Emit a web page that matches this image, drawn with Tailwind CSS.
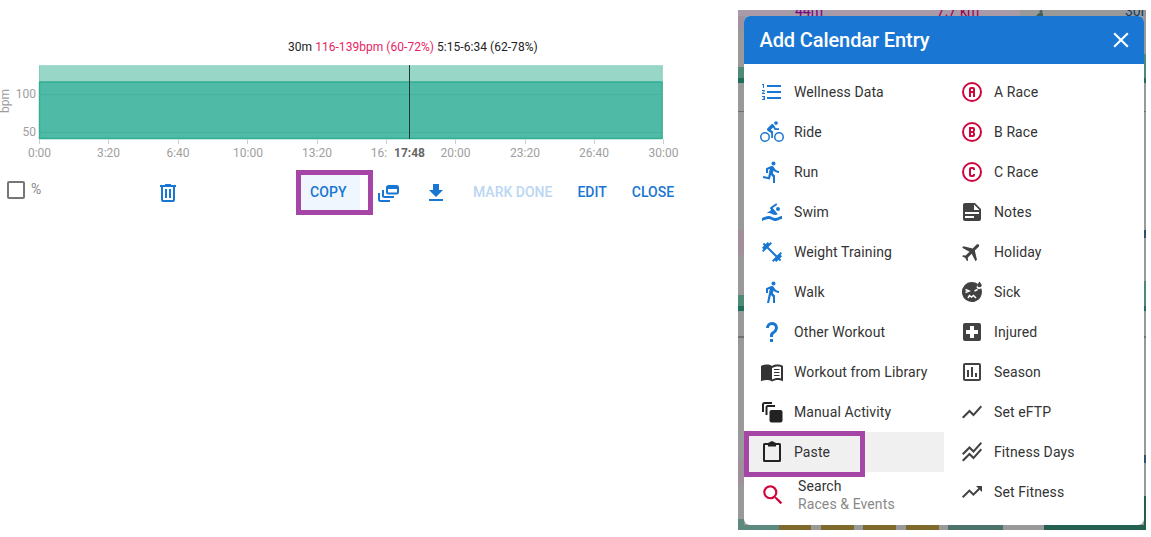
<!doctype html>
<html><head><meta charset="utf-8"><title>Add Calendar Entry</title>
<script src="https://cdn.jsdelivr.net/npm/@tailwindcss/browser@4"></script></head>
<body class="bg-white">
<div class="flex w-[1151px] h-[537px] overflow-hidden font-[Roboto,sans-serif]">
  <!-- left: workout panel -->
  <section class="relative w-[738px] shrink-0">
    <p class="pt-[40px] h-[60px] pl-[288px] text-[12px] leading-[15px] tracking-[0.04px] text-[#222] whitespace-nowrap">30m <span class="text-[#e91e63]">116-139bpm (60-72%)</span> 5:15-6:34 (62-78%)</p>
    <svg class="block" width="738" height="105" viewBox="0 60 738 105" font-family="Roboto" font-size="12" fill="#9e9e9e">
      <rect x="39" y="65" width="623.5" height="17" fill="#98d6c8"/>
      <rect x="39" y="82" width="623.5" height="57" fill="#4fbba6"/>
      <path d="M39.5 65V139M662 65V139" stroke="#7fcdb9" stroke-width="1" fill="none"/>
      <path d="M39 65.5H663" stroke="#a6dccf" fill="none"/>
      <path d="M39 82H662.500M39 138.500H662.500M39.500 82V139M662 82V139" stroke="#2fae90" stroke-width="1.4" fill="none"/>
      <path d="M39 94.500H662M39 132.500H662" stroke="#47b29c" fill="none"/>
      <path d="M409.5 65V139" stroke="#1b3a33" fill="none"/>
      <path d="M39.5 139V144M108.5 139V144M178.5 139V144M247.5 139V144M317.5 139V144M386.5 139V144M455.5 139V144M525.5 139V144M594.5 139V144M663.5 139V144" stroke="#cfcfcf" fill="none"/>
      <g text-anchor="middle">
        <text x="39.5" y="157">0:00</text><text x="108.5" y="157">3:20</text><text x="178" y="157">6:40</text><text x="248" y="157">10:00</text><text x="317" y="157">13:20</text><text x="379" y="157">16:</text><text x="455.5" y="157">20:00</text><text x="525" y="157">23:20</text><text x="594" y="157">26:40</text><text x="663.500" y="157">30:00</text>
        <text x="409.5" y="157" fill="#666" font-weight="700">17:48</text>
      </g>
      <g text-anchor="end"><text x="36" y="98">100</text><text x="36" y="136">50</text></g>
      <text transform="translate(9 101) rotate(-90)" text-anchor="middle">bpm</text>
    </svg>
    <div class="flex items-center h-[55px]">
      <span class="ml-[7px] w-[18px] h-[18px] border-2 border-[#757575] rounded-[2px] -mt-[5px]"></span>
      <span class="ml-[6px] w-[10px] text-[14px] text-[#888] -mt-[7px]">%</span>
      <svg class="ml-[115px]" width="24" height="24" viewBox="0 0 24 24" fill="#1976d2"><path d="M9,3V4H4V6H5V19A2,2 0 0,0 7,21H17A2,2 0 0,0 19,19V6H20V4H15V3H9M7,6H17V19H7V6M9,8V17H11V8H9M13,8V17H15V8H13Z"/></svg>
      <span class="ml-[121px] w-[59px] h-[35px] bg-[#f0f6fd] flex items-center pl-[9px] text-[14px] tracking-[0.1px] font-medium text-[#1976d2]">COPY</span>
      <svg class="ml-[16px]" width="24" height="24" viewBox="0 0 24 24" fill="none" stroke="#1976d2" stroke-width="2"><path d="M3 12v6.500a1.500 1.500 0 0 0 1.500 1.500H14"/><path d="M7 9v5.500a1.500 1.500 0 0 0 1.500 1.500H18"/><rect x="11" y="5" width="11" height="7.500" rx="1.500"/><path d="M11 6.500h11" stroke-width="3"/></svg>
      <svg class="ml-[24px]" width="24" height="24" viewBox="0 0 24 24" fill="#1976d2"><path d="M19 9h-4V3H9v6H5l7 7 7-7zM5 18v2h14v-2H5z"/></svg>
      <span class="ml-[25px] text-[14px] font-medium text-[#bad6f2]">MARK DONE</span>
      <span class="ml-[25px] text-[14px] font-medium text-[#1976d2]">EDIT</span>
      <span class="ml-[25px] text-[14px] font-medium text-[#1976d2]">CLOSE</span>
    </div>
    <div class="absolute left-[296px] top-[170px] w-[77px] h-[45px] border-[5px] border-[#a545a5]"></div>
  </section>

  <!-- right: dialog over dimmed calendar -->
  <section class="relative mt-[10px] w-[408px] h-[520px] shrink-0 bg-[#999] overflow-hidden p-[6px]">
    <div class="absolute left-0 top-0 w-[282px] h-[6px] bg-[#a89aa6]"></div>
    <span class="absolute left-[57px] -top-[7px] text-[14px] leading-[16px] text-[#800080]">44m</span>
    <span class="absolute left-[199px] -top-[7px] text-[14px] leading-[16px] text-[#a0005a]">7.7 km</span>
    <span class="absolute left-[387px] -top-[7px] text-[14px] leading-[16px] text-[#123c66]">30m</span>
    <svg class="absolute left-[296px] top-0" width="12" height="6" viewBox="0 0 12 6" fill="#43605e"><circle cx="7" cy="1.500" r="1.500"/><path d="M2 6l3-3h4v3z"/></svg>
    <div class="absolute left-0 top-[6px] w-[6px] h-[12px] bg-[#a2919f]"></div>
    <div class="absolute right-0 top-[44px] w-[2px] h-[13px] bg-[#4f8a78]"></div>
    <div class="absolute left-0 top-[57px] w-full h-[11px] bg-[#4f8a78]"></div>
    <div class="absolute left-0 top-[68px] w-full h-[5px] bg-[#1f6e5c]"></div>
    <div class="absolute left-0 top-[101px] w-full h-[1px] bg-[#707070]"></div>
    <div class="absolute left-0 top-[220px] w-[6px] h-[25px] bg-[#a0909c]"></div>
    <div class="absolute right-0 top-[271px] w-[2px] h-[14px] bg-[#4f8a78]"></div>
    <div class="absolute left-0 top-[285px] w-full h-[11px] bg-[#4f8a78]"></div>
    <div class="absolute left-0 top-[296px] w-full h-[5px] bg-[#1f6e5c]"></div>
    <div class="absolute left-0 top-[326px] w-full h-[2px] bg-[#707070]"></div>
    <div class="absolute left-0 top-[450px] w-[6px] h-[25px] bg-[#a0909c]"></div>
    <div class="absolute right-0 top-[220px] w-[2px] h-[8px] bg-[#2f4f6f]"></div>
    <div class="absolute right-0 top-[445px] w-[2px] h-[8px] bg-[#2f4f6f]"></div>
    <div class="absolute right-0 top-[486px] w-[2px] h-[34px] bg-[#24604f]"></div>
    <div class="absolute left-0 top-[509px] w-[6px] h-[11px] bg-[#5d8a7e]"></div>
    <div class="absolute left-0 bottom-0 w-full h-[5px] flex">
      <span class="w-[41px] bg-[#5d8a7e]"></span><span class="w-[32px] bg-[#7d6a2c]"></span><span class="w-[10px]"></span><span class="w-[33px] bg-[#7d6a2c]"></span><span class="w-[9px]"></span><span class="w-[33px] bg-[#7d6a2c]"></span><span class="w-[10px]"></span><span class="w-[33px] bg-[#7d6a2c]"></span><span class="w-[9px]"></span><span class="w-[55px] bg-[#4d7269]"></span><span class="w-[41px]"></span><span class="flex-1 bg-[#24604f]"></span>
    </div>

    <div class="relative w-[400px] h-[509px] bg-white rounded-[6px] overflow-hidden">
      <header class="h-[48px] bg-[#1976d2] flex items-center justify-between pl-[15.500px] pr-[10px] text-white">
        <h2 class="text-[20px] font-medium tracking-[-0.1px]">Add Calendar Entry</h2>
        <svg width="26" height="26" viewBox="0 0 24 24" fill="#fff"><path d="M19 6.410 17.590 5 12 10.590 6.410 5 5 6.410 10.590 12 5 17.590 6.410 19 12 13.410 17.590 19 19 17.590 13.410 12z"/></svg>
      </header>
      <div class="flex pt-[8px] text-[14px] tracking-[0.1px] text-[#333]">
        <ul class="w-[200px]">
          <li class="h-[40px] flex items-center pl-[16px] gap-[10px]"><svg width="24" height="24" viewBox="0 0 24 24" fill="#1976d2"><path d="M7,13V11H21V13H7M7,19V17H21V19H7M7,7V5H21V7H7M3,8V5H2V4H4V8H3M2,17V16H5V20H2V19H4V18.500H3V17.500H4V17H2M4.250,10A0.750,0.750 0 0,1 5,10.750C5,10.950 4.920,11.140 4.790,11.270L3.120,13H5V14H2V13.080L4,11H2V10H4.250Z"/></svg>Wellness Data</li>
          <li class="h-[40px] flex items-center pl-[16px] gap-[10px]"><svg width="24" height="24" viewBox="0 0 24 24" fill="#1976d2"><path d="M5,20.500A3.500,3.500 0 0,1 1.500,17A3.500,3.500 0 0,1 5,13.500A3.500,3.500 0 0,1 8.500,17A3.500,3.500 0 0,1 5,20.500M5,12A5,5 0 0,0 0,17A5,5 0 0,0 5,22A5,5 0 0,0 10,17A5,5 0 0,0 5,12M14.800,10H19V8.200H15.800L13.860,4.930C13.570,4.430 13,4.100 12.400,4.100C11.930,4.100 11.500,4.290 11.200,4.600L7.500,8.290C7.190,8.600 7,9 7,9.500C7,10.130 7.330,10.660 7.850,10.970L11.200,13V18H13V11.500L10.750,9.850L13.070,7.500M19,20.500A3.500,3.500 0 0,1 15.500,17A3.500,3.500 0 0,1 19,13.500A3.500,3.500 0 0,1 22.500,17A3.500,3.500 0 0,1 19,20.500M19,12A5,5 0 0,0 14,17A5,5 0 0,0 19,22A5,5 0 0,0 24,17A5,5 0 0,0 19,12M16,4.800C17,4.800 17.800,4 17.800,3C17.800,2 17,1.200 16,1.200C15,1.200 14.200,2 14.200,3C14.200,4 15,4.800 16,4.800Z"/></svg>Ride</li>
          <li class="h-[40px] flex items-center pl-[16px] gap-[10px]"><svg width="24" height="24" viewBox="0 0 24 24" fill="#1976d2"><path d="M13.490 5.480c1.100 0 2-.9 2-2s-.9-2-2-2-2 .9-2 2 .9 2 2 2zm-3.600 13.900l1-4.400 2.100 2v6h2v-7.500l-2.100-2 .6-3c1.300 1.500 3.300 2.500 5.500 2.500v-2c-1.900 0-3.500-1-4.300-2.400l-1-1.600c-.4-.6-1-1-1.700-1-.3 0-.5.1-.8.1l-5.200 2.200v4.700h2v-3.400l1.800-.7-1.600 8.100-4.900-1-.4 2 7 1.400z"/></svg>Run</li>
          <li class="h-[40px] flex items-center pl-[16px] gap-[10px]"><svg width="24" height="24" viewBox="0 0 24 24" fill="#1976d2"><path d="M2,18C4.220,17 6.440,16 8.670,16C10.890,16 13.110,18 15.330,18C17.560,18 19.780,16 22,16V19C19.780,19 17.560,21 15.330,21C13.110,21 10.890,19 8.670,19C6.440,19 4.220,20 2,21V18M8.670,13C7.890,13 7.120,13.120 6.350,13.330L11.250,9.890L10.250,8.690C10.060,8.470 9.960,8.170 10.030,7.880C10.060,7.600 10.220,7.350 10.450,7.190L16.200,3.160L17.350,4.800L12.710,8.050L17.810,14.170C17,14.560 16.170,14.850 15.330,15C13.110,15 10.890,13 8.670,13M18,7A2,2 0 0,1 20,9A2,2 0 0,1 18,11A2,2 0 0,1 16,9A2,2 0 0,1 18,7Z"/></svg>Swim</li>
          <li class="h-[40px] flex items-center pl-[16px] gap-[10px]"><svg width="24" height="24" viewBox="0 0 24 24" fill="#1976d2"><path d="M20.570 14.860L22 13.430 20.570 12 17 15.570 8.430 7 12 3.430 10.570 2 9.140 3.430 7.710 2 5.570 4.140 4.140 2.710 2.710 4.140l1.430 1.430L2 7.710l1.430 1.430L2 10.570 3.430 12 7 8.430 15.570 17 12 20.570 13.430 22l1.430-1.430L16.290 22l2.140-2.140 1.430 1.430 1.430-1.430-1.430-1.430L22 16.290z"/></svg>Weight Training</li>
          <li class="h-[40px] flex items-center pl-[16px] gap-[10px]"><svg width="24" height="24" viewBox="0 0 24 24" fill="#1976d2"><path d="M13.500 5.500c1.100 0 2-.9 2-2s-.9-2-2-2-2 .9-2 2 .9 2 2 2zM9.800 8.900L7 23h2.100l1.800-8 2.100 2v6h2v-7.500l-2.100-2 .6-3C14.800 12 16.800 13 19 13v-2c-1.900 0-3.500-1-4.300-2.400l-1-1.600c-.4-.6-1-1-1.700-1-.3 0-.5.1-.8.1L6 8.300V13h2V9.600l1.800-.7"/></svg>Walk</li>
          <li class="h-[40px] flex items-center pl-[16px] gap-[10px]"><svg width="24" height="24" viewBox="0 0 24 24" fill="#1976d2"><path d="M10,19H13V22H10V19M12,2C17.350,2.220 19.680,7.620 16.500,11.670C15.670,12.670 14.330,13.330 13.670,14.170C13,15 13,16 13,17H10C10,15.330 10,13.920 10.670,12.920C11.330,11.920 12.670,11.330 13.500,10.670C15.920,8.430 15.320,5.260 12,5A3,3 0 0,0 9,8H6A6,6 0 0,1 12,2Z"/></svg>Other Workout</li>
          <li class="h-[40px] flex items-center pl-[16px] gap-[10px]"><svg width="24" height="24" viewBox="0 0 24 24" fill="#333"><path d="M21 5c-1.110-.35-2.330-.5-3.500-.5-1.950 0-4.050.4-5.500 1.500-1.450-1.100-3.550-1.500-5.500-1.500S2.450 4.900 1 6v14.650c0 .25.25.5.5.5.1 0 .15-.05.25-.05C3.100 20.450 5.050 20 6.500 20c1.950 0 4.050.4 5.500 1.500 1.350-.85 3.800-1.500 5.500-1.500 1.650 0 3.350.3 4.750 1.050.1.05.15.05.25.05.25 0 .5-.25.5-.5V6c-.6-.45-1.250-.75-2-1zm0 13.500c-1.100-.35-2.300-.5-3.500-.5-1.700 0-4.150.65-5.500 1.500V8c1.350-.85 3.800-1.500 5.500-1.500 1.200 0 2.400.15 3.500.5v11.500z"/><path d="M14 9.500h5.500M14 12.500h5.500M14 15.500h5.500" stroke="#333" fill="none"/></svg>Workout from Library</li>
          <li class="h-[40px] flex items-center pl-[16px] gap-[10px]"><svg width="24" height="24" viewBox="0 0 24 24" fill="#222"><path d="M3 12V4.500A1.500 1.500 0 0 1 4.500 3H12" fill="none" stroke="#222" stroke-width="2"/><path d="M6.500 15V7.500A1.500 1.500 0 0 1 8 6H15" fill="none" stroke="#222" stroke-width="2"/><rect x="9.500" y="10" width="13" height="12.500" rx="2"/></svg>Manual Activity</li>
          <li class="h-[40px] flex items-center pl-[16px] gap-[10px] bg-[#f0f0f0]"><svg width="24" height="24" viewBox="0 0 24 24" fill="#222"><path fill-rule="evenodd" d="M8 3 12 1l4 2h3.500A1.500 1.500 0 0 1 21 4.500V20.500A1.500 1.500 0 0 1 19.500 22H4.500A1.500 1.500 0 0 1 3 20.500V4.500A1.500 1.500 0 0 1 4.500 3zM5 5v15h14V5h-3v1.500H8V5z"/></svg>Paste</li>
          <li class="h-[40px] flex items-center pl-[16px] gap-[12px]"><svg class="mt-[5px]" width="26" height="26" viewBox="0 0 24 24" fill="#d0063e"><path d="M9.500,3A6.500,6.500 0 0,1 16,9.500C16,11.110 15.410,12.590 14.440,13.730L14.710,14H15.500L20.500,19L19,20.500L14,15.500V14.710L13.730,14.440C12.590,15.410 11.110,16 9.500,16A6.500,6.500 0 0,1 3,9.500A6.500,6.500 0 0,1 9.500,3M9.500,5C7,5 5,7 5,9.500C5,12 7,14 9.500,14C12,14 14,12 14,9.500C14,7 12,5 9.500,5Z"/></svg><span class="block mt-[5px] leading-[18px]"><span class="block">Search</span><span class="block text-[#888]">Races &amp; Events</span></span></li>
        </ul>
        <ul class="w-[200px]">
          <li class="h-[40px] flex items-center pl-[16px] gap-[10px]"><svg width="24" height="24" viewBox="0 0 24 24" fill="#d0063e"><path d="M11,7H13A2,2 0 0,1 15,9V17H13V13H11V17H9V9A2,2 0 0,1 11,7M11,9V11H13V9H11M12,20A8,8 0 0,0 20,12A8,8 0 0,0 12,4A8,8 0 0,0 4,12A8,8 0 0,0 12,20M12,2A10,10 0 0,1 22,12A10,10 0 0,1 12,22A10,10 0 0,1 2,12A10,10 0 0,1 12,2Z"/></svg>A Race</li>
          <li class="h-[40px] flex items-center pl-[16px] gap-[10px]"><svg width="24" height="24" viewBox="0 0 24 24" fill="#d0063e"><path d="M15,10.500C15,11.300 14.300,12 13.500,12C14.300,12 15,12.700 15,13.500V15A2,2 0 0,1 13,17H9V7H13A2,2 0 0,1 15,9V10.500M13,15V13H11V15H13M13,11V9H11V11H13M12,2A10,10 0 0,1 22,12A10,10 0 0,1 12,22A10,10 0 0,1 2,12A10,10 0 0,1 12,2M12,4A8,8 0 0,0 4,12A8,8 0 0,0 12,20A8,8 0 0,0 20,12A8,8 0 0,0 12,4Z"/></svg>B Race</li>
          <li class="h-[40px] flex items-center pl-[16px] gap-[10px]"><svg width="24" height="24" viewBox="0 0 24 24" fill="#d0063e"><path d="M11,7H13A2,2 0 0,1 15,9V10H13V9H11V15H13V14H15V15A2,2 0 0,1 13,17H11A2,2 0 0,1 9,15V9A2,2 0 0,1 11,7M12,2A10,10 0 0,1 22,12A10,10 0 0,1 12,22A10,10 0 0,1 2,12A10,10 0 0,1 12,2M12,4A8,8 0 0,0 4,12A8,8 0 0,0 12,20A8,8 0 0,0 20,12A8,8 0 0,0 12,4Z"/></svg>C Race</li>
          <li class="h-[40px] flex items-center pl-[16px] gap-[10px]"><svg width="24" height="24" viewBox="0 0 24 24" fill="#424242"><path d="M14,10H19.500L14,4.500V10M5,3H15L21,9V19A2,2 0 0,1 19,21H5C3.890,21 3,20.100 3,19V5C3,3.890 3.890,3 5,3M5,12V14H19V12H5M5,16V18H14V16H5Z"/></svg>Notes</li>
          <li class="h-[40px] flex items-center pl-[16px] gap-[10px]"><svg width="24" height="24" viewBox="0 0 24 24" fill="#424242"><path transform="rotate(45 12 12)" d="M21 16v-2l-8-5V3.500c0-.83-.67-1.500-1.500-1.500S10 2.670 10 3.500V9l-8 5v2l8-2.500V19l-2 1.500V22l3.500-1 3.500 1v-1.500L13 19v-5.500l8 2.500z"/></svg>Holiday</li>
          <li class="h-[40px] flex items-center pl-[16px] gap-[10px]"><svg width="24" height="24" viewBox="0 0 24 24" fill="#424242"><path d="M12 2a10 10 0 0 1 6 2l-1.500 3a2.500 2.500 0 0 0 4.600 1A10 10 0 1 1 12 2z"/><path d="M19.500 1.500 21.800 5a2.300 2.300 0 1 1-4.600 0z"/><path d="M5.500 9.500 9 11 5.500 12.500M14.500 11l3-1.500M8 18l1.500-2.500 2 1.500 2-1.500L16 18" fill="none" stroke="#fff" stroke-width="1.500"/></svg>Sick</li>
          <li class="h-[40px] flex items-center pl-[16px] gap-[10px]"><svg width="24" height="24" viewBox="0 0 24 24" fill="#424242"><path d="M18,14H14V18H10V14H6V10H10V6H14V10H18M19,3H5C3.890,3 3,3.890 3,5V19A2,2 0 0,0 5,21H19A2,2 0 0,0 21,19V5C21,3.890 20.100,3 19,3Z"/></svg>Injured</li>
          <li class="h-[40px] flex items-center pl-[16px] gap-[10px]"><svg width="24" height="24" viewBox="0 0 24 24" fill="#424242"><path d="M9 17H7V10H9V17M13 17H11V7H13V17M17 17H15V13H17V17M19 19H5V5H19V19.100M19 3H5C3.900 3 3 3.900 3 5V19C3 20.100 3.900 21 5 21H19C20.100 21 21 20.100 21 19V5C21 3.900 20.100 3 19 3Z"/></svg>Season</li>
          <li class="h-[40px] flex items-center pl-[16px] gap-[10px]"><svg width="24" height="24" viewBox="0 0 24 24" fill="#424242"><path d="M3.500 18.490l6-6.010 4 4L22 6.920l-1.410-1.410-7.090 7.970-4-4L2 16.990z"/></svg>Set eFTP</li>
          <li class="h-[40px] flex items-center pl-[16px] gap-[10px]"><svg width="24" height="24" viewBox="0 0 24 24" fill="#424242"><path transform="translate(0 -3.500)" d="M3.500 18.490l6-6.010 4 4L22 6.920l-1.410-1.410-7.090 7.970-4-4L2 16.990z"/><path transform="translate(0 3)" d="M3.500 18.490l6-6.010 4 4L22 6.920l-1.410-1.410-7.090 7.970-4-4L2 16.990z"/></svg>Fitness Days</li>
          <li class="h-[40px] flex items-center pl-[16px] gap-[10px]"><svg width="24" height="24" viewBox="0 0 24 24" fill="#424242"><path d="M16 6l2.290 2.290-4.880 4.880-4-4L2 16.590 3.410 18l6-6 4 4 6.300-6.290L22 12V6z"/></svg>Set Fitness</li>
        </ul>
      </div>
      <div class="absolute left-0 top-[415px] w-[121px] h-[46px] border-[5px] border-[#a545a5]"></div>
    </div>
  </section>
</div>
</body></html>
